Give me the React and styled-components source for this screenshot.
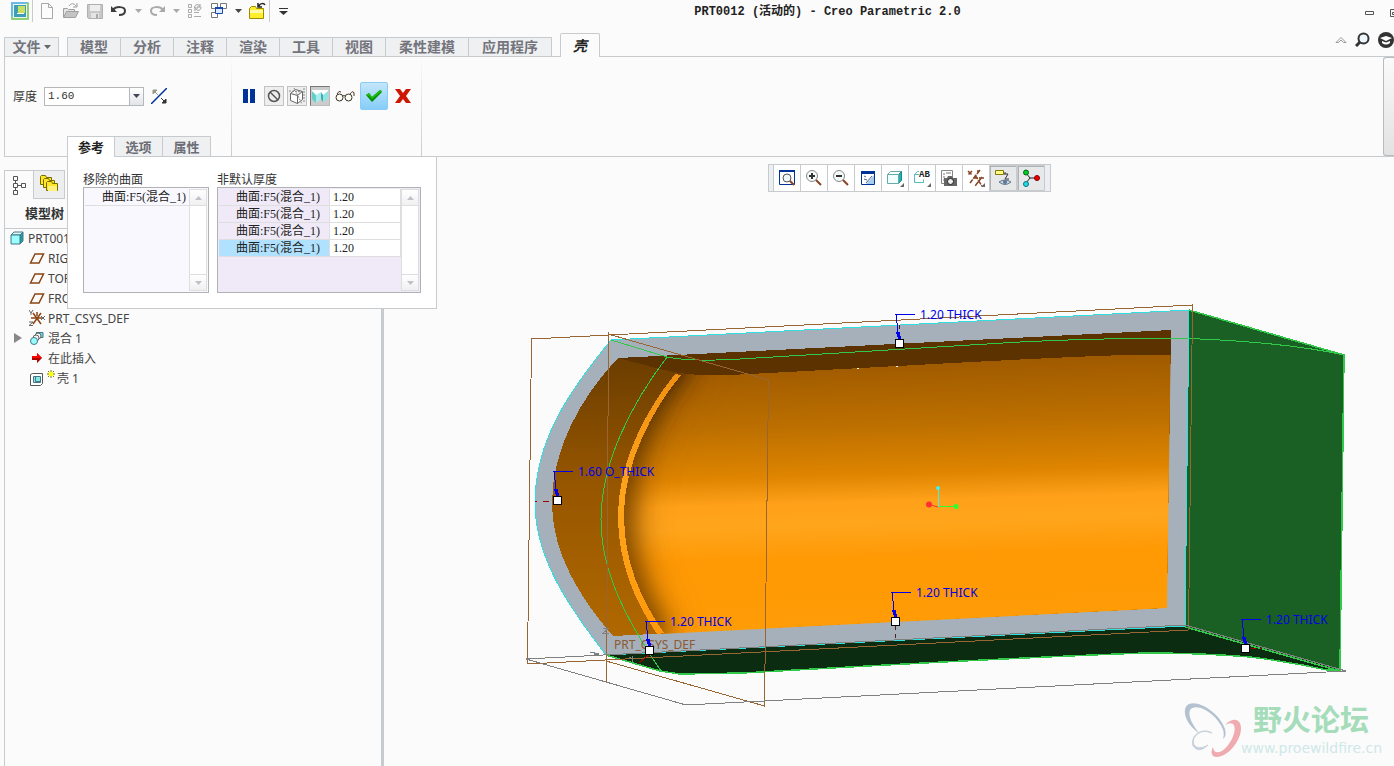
import React, { useState } from 'react';
import styled, { createGlobalStyle, css } from 'styled-components';

const line = '#c8cbce';
const wire = '#996633';

const GlobalStyle = createGlobalStyle`
  * {
    box-sizing: border-box;
  }
  body {
    margin: 0;
    background: #fbfbfb;
    color: #333;
    font-family: 'Noto Sans', 'Noto Sans CJK SC', sans-serif;
    font-size: 12px;
  }
  button, input {
    font: inherit;
    color: inherit;
  }
  svg {
    display: block;
    flex: none;
  }
`;

const Page = styled.div`
  display: flex;
  flex-direction: column;
  height: 100vh;
  overflow: hidden;
`;

const TitleBar = styled.header`
  display: flex;
  flex: none;
  height: 33px;
`;

const QuickAccess = styled.div`
  display: flex;
  align-items: center;
  height: 22px;
  padding-left: 8px;
`;

const PlainButton = styled.button`
  display: flex;
  align-items: center;
  justify-content: center;
  padding: 0;
  border: none;
  background: none;
  cursor: pointer;
`;

const QuickButton = styled(PlainButton)`
  width: ${(p) => (p.$caret ? 14 : 24)}px;
  height: 22px;
`;

const QuickSeparator = styled.span`
  width: 1px;
  height: 22px;
  margin: 0 ${(p) => (p.$last ? 6 : 2)}px 0 0;
  background: ${line};
`;

const WindowTitle = styled.h1`
  flex: 1;
  margin: 0;
  text-align: center;
  font: bold 12px/24px 'Liberation Mono', 'Noto Sans CJK SC', monospace;
  color: #222;
`;

const WindowButtons = styled.div`
  display: flex;
  align-items: center;
  gap: 16px;
  height: 25px;
  margin-right: -5px;
`;

const TabRow = styled.nav`
  display: flex;
  flex: none;
  align-items: flex-end;
  height: 24px;
  padding-left: 4px;
  position: relative;
  z-index: 1;
`;

const RibbonTab = styled(PlainButton)`
  height: 20px;
  padding: 0 12px;
  gap: 3px;
  border: solid ${line};
  border-width: 1px 1px 1px 0;
  background: #eef0f2;
  color: #74747c;
  font-size: 14px;
  line-height: 18px;
  font-weight: bold;
  white-space: nowrap;
`;

const FileTab = styled(RibbonTab)`
  width: 55px;
  padding: 0;
  border-left-width: 1px;
  margin-right: 8px;
`;

const TabGroup = styled.div`
  display: flex;
  border-left: 1px solid ${line};
  margin-right: 8px;
`;

const WideTab = styled(RibbonTab)`
  padding: 0 13px;
`;

const ActiveTab = styled(RibbonTab)`
  height: 24px;
  width: 40px;
  border-width: 1px 1px 0;
  border-radius: 2px 2px 0 0;
  background: #fbfbfb;
  color: #222;
  font-style: italic;
`;

const TabTools = styled.div`
  display: flex;
  align-items: center;
  align-self: flex-start;
  gap: 8px;
  height: 13px;
  margin-left: auto;
`;

const Ribbon = styled.section`
  display: flex;
  flex: none;
  position: relative;
  margin: -1px 0 0 4px;
  border: solid ${line};
  border-width: 1px 0 1px 1px;
`;

const RibbonGroup = styled.div`
  width: ${(p) => p.$width}px;
  border-right: 1px solid;
  border-image: linear-gradient(#fbfbfb, ${line}) 1;
`;

const Controls = styled.div`
  display: flex;
  align-items: center;
  height: 79px;
  padding: 0 0 1px ${(p) => p.$indent}px;
  gap: ${(p) => p.$gap}px;
`;

const Combo = styled.div`
  display: flex;
  width: 100px;
  height: 19px;
  border: 1px solid #b4b8bb;
  background: #fff;
`;

const ComboInput = styled.input`
  flex: 1;
  min-width: 0;
  padding: 0 3px;
  border: none;
  outline: none;
  background: none;
  font: 11px 'Liberation Mono', monospace;
`;

const ComboButton = styled(PlainButton)`
  width: 14px;
  border-left: 1px solid #b4b8bb;
  background: linear-gradient(#fff, #e2e4e8);
`;

const ToolButton = styled(PlainButton)`
  width: 20px;
  height: 20px;
  border: 1px solid #c0c2c4;
  background: #eeeeee;
  ${(p) =>
    p.$flat &&
    css`
      width: 24px;
      border: none;
      background: none;
    `}
  ${(p) =>
    p.$pressed &&
    css`
      border-color: #777 #bbb #bbb #777;
      background: #cccccc;
    `}
`;

const AcceptButton = styled(PlainButton)`
  width: 28px;
  height: 28px;
  border: 1px solid #8accf5;
  border-radius: 2px;
  background: linear-gradient(#c4e6fb, #86cdf8);
`;

const PanelTabs = styled.div`
  display: flex;
  margin: 0 0 -1px 62px;
  position: relative;
  z-index: 5;
`;

const PanelTab = styled(PlainButton)`
  width: 48px;
  height: 21px;
  border: solid ${line};
  border-width: 1px 1px ${(p) => (p.$active ? 0 : 1)}px ${(p) => (p.$active ? 1 : 0)}px;
  background: ${(p) => (p.$active ? '#fff' : '#eef0f2')};
  color: ${(p) => (p.$active ? '#222' : '#6c6c74')};
  font-size: 13px;
  line-height: 18px;
  font-weight: bold;
`;

const RibbonScroll = styled(PlainButton)`
  width: 11px;
  margin-left: auto;
  border: 1px solid #b8bbbe;
  border-right: none;
  border-radius: 3px 0 0 3px;
  background: linear-gradient(#fafafa, #e2e2e2);
`;

// Slides out under the ribbon, over the tree and the graphics window
const SlidePanel = styled.div`
  position: absolute;
  top: 99px;
  left: 62px;
  z-index: 4;
  display: flex;
  gap: 8px;
  width: 370px;
  padding: 16px 15px 15px;
  border: 1px solid ${line};
  background: #fff;
`;

const Collector = styled.section`
  width: ${(p) => p.$width}px;
`;

const CollectorTitle = styled.h2`
  margin: 0;
  font-size: 12px;
  font-weight: normal;
  line-height: 14px;
`;

const CollectorBox = styled.div`
  display: flex;
  height: 106px;
  padding: 1px;
  border: 1px solid #b0b2b4;
  background: ${(p) => p.$bg};
`;

const Rows = styled.table`
  flex: 1;
  align-self: flex-start;
  border-collapse: separate;
  border-spacing: 0;
  table-layout: fixed;
  font: 12px 'Liberation Serif', 'Noto Sans CJK SC', serif;
  color: #222;
`;

const NameCell = styled.td`
  height: 17px;
  padding: 0 1px 0 17px;
  border-bottom: 1px solid #dedede;
  background: ${(p) => (p.$selected ? '#b0e2ff' : 'transparent')};
  line-height: 16px;
  white-space: nowrap;
`;

const ValueCell = styled.td`
  width: 72px;
  padding: 0 3px;
  border: solid #dedede;
  border-width: 0 1px 1px;
  background: #fff;
  line-height: 16px;
`;

const ScrollTrack = styled.div`
  display: flex;
  flex-direction: column;
  justify-content: space-between;
  width: 18px;
  border: 1px solid #dcdee0;
  background: #fff;
`;

const ScrollButton = styled(PlainButton)`
  height: 16px;
  border-${(p) => (p.$down ? 'top' : 'bottom')}: 1px solid #dcdee0;
  background: linear-gradient(#fff, #f0f0f0);
`;

const Workspace = styled.main`
  display: flex;
  flex: 1;
  min-height: 0;
`;

const Navigator = styled.aside`
  display: flex;
  flex: none;
  flex-direction: column;
  width: 380px;
  margin-left: 4px;
  padding-top: 13px;
  border-right: 3px solid ${line};
`;

const NavigatorBody = styled.div`
  flex: 1;
  border-left: 1px solid ${line};
`;

const NavTabs = styled.div`
  display: flex;
  height: 29px;
`;

const NavTab = styled(PlainButton)`
  width: ${(p) => (p.$active ? 29 : 31)}px;
  border: solid ${line};
  border-width: 1px 1px ${(p) => (p.$active ? 0 : 1)}px 0;
  background: ${(p) => (p.$active ? 'none' : '#eceef0')};
`;

const TreeTitle = styled.h2`
  margin: 0;
  padding: 0 20px 1px;
  border-bottom: 1px solid ${line};
  font-size: 13px;
  line-height: 28px;
`;

const Tree = styled.ul`
  margin: 0;
  padding: 0;
  list-style: none;
`;

const TreeRow = styled.li`
  display: flex;
  align-items: center;
  height: 20px;
  padding: 0 0 2px ${(p) => (p.$root ? 5 : 9)}px;
  color: #444;
`;

const Expander = styled(PlainButton)`
  width: 15px;
  justify-content: flex-start;
`;

const TreeIcon = styled.span`
  display: flex;
  justify-content: ${(p) => (p.$root || p.$wide ? 'flex-start' : 'center')};
  width: ${(p) => (p.$wide ? 28 : p.$root ? 18 : 16)}px;
  margin-right: ${(p) => (p.$root || p.$wide ? 0 : 3)}px;
`;

const Viewport = styled.section`
  position: relative;
  flex: 1;
  min-width: 0;
`;

const Scene = styled.svg`
  width: 100%;
  height: 100%;
`;

const ViewToolbar = styled.div`
  position: absolute;
  top: 7px;
  left: 384px;
  display: flex;
  height: 28px;
  padding: 0 5px 0 4px;
  border: 1px solid ${line};
  background: #eceef2;
`;

const ViewButton = styled(PlainButton)`
  width: 27px;
  border-left: 1px solid ${line};
  background: #fff;
  ${(p) =>
    p.$pressed &&
    css`
      width: 28px;
      border: 1px solid ${line};
      background: #e6e8ea;
      box-shadow: inset 1px 1px 0 #b0b2b4;
    `}
`;

const Icon = ({ w = 16, h = w, children }) => (
  <svg width={w} height={h} viewBox={`0 0 ${w} ${h}`} fill="none" aria-hidden="true">
    {children}
  </svg>
);

const Caret = ({ color = '#444', up }) => (
  <Icon w={7} h={4}>
    <path d={up ? 'M0 4h7L3.500 0z' : 'M0 0h7L3.500 4z'} fill={color} />
  </Icon>
);

const AppIcon = () => (
  <Icon w={18}>
    <rect width="18" height="18" rx="1" fill="#8fcf78" />
    <path d="M0 1q0-1 1-1h16L0 15z" fill="#6cb8e8" />
    <path d="M2 2h14v14H2z" fill="#e9f6ee" />
    <path d="M3 3h3v10H3zM3 12h12v3H3z" fill="#3f9db4" />
    <path d="M6 3h9v9H6z" fill="#3f9db4" />
    <path d="M7 4h7v7H7z" fill="#c8e060" />
    <path d="M6 11h7v1H6z" fill="#fff" />
  </Icon>
);

const NewIcon = () => (
  <Icon>
    <path d="M2.500 .5h7l4 4v11h-11zM9.500 .5v4h4" fill="#fcfcfc" stroke="#a8a8a8" />
  </Icon>
);

const OpenIcon = () => (
  <Icon w={18}>
    <path d="M1.500 15V6.500h4l1 1h6V10" fill="#e4e4e4" stroke="#a0a0a0" />
    <path d="M1.500 15.500l3-6h12l-3 6z" fill="#c4c4c4" stroke="#a0a0a0" />
    <path d="M7 4c2-3 5-3 7 0M15 1v4h-4" stroke="#999" />
  </Icon>
);

const SaveIcon = () => (
  <Icon>
    <path d="M.5 1.500h15v14h-14l-1-1z" fill="#c8c8c8" stroke="#b0b0b0" />
    <path d="M3 2h10v6H3z" fill="#eee" />
    <path d="M4 10h8v5H4z" fill="#e4e4e4" />
    <path d="M9 11h2v4H9z" fill="#aaa" />
  </Icon>
);

const UndoIcon = () => (
  <Icon>
    <path d="M0 3v6h6z" fill="#3c3c3c" />
    <path d="M2 7c3-4 12-4 12 1 0 3-3 4-6 4" stroke="#3c3c3c" strokeWidth="2" />
  </Icon>
);

const RedoIcon = () => (
  <Icon>
    <path d="M16 3v6h-6z" fill="#aaa" />
    <path d="M14 7C11 3 2 3 2 8c0 3 3 4 6 4" stroke="#aaa" strokeWidth="2" />
  </Icon>
);

const RegenerateIcon = () => (
  <Icon>
    <path d="M1.500 1.500h3v3h-3zM1.500 6.500h3v3h-3zM1.500 11.500h3v3h-3zM7 9.500h5M7 13.500h7" stroke="#aaa" />
    <path d="M7.500 5c0-4 4-4 5-2M14 4c0 4-4 4-5 2M13 1v3h-3M8 8V5h3" stroke="#999" />
  </Icon>
);

const WindowsIcon = () => (
  <Icon>
    <path d="M.5 .5h6v5h-6zM9.500 .5h6v5h-6zM.5 9.500h6v5h-6z" fill="#fff" stroke="#777" />
    <path d="M4.500 4.500h7v6h-7z" fill="#dceaff" stroke="#1648b0" />
    <path d="M4 4h8v2H4z" fill="#1648b0" />
  </Icon>
);

const CloseFolderIcon = () => (
  <Icon w={18}>
    <path d="M1.500 16.500v-10l2-2h4l1 2h7v10z" fill="#ffee2c" stroke="#9c8a00" />
    <path d="M2 8h13v3H2z" fill="#fff9a8" />
    <path d="M11 4c1-3 5-3 6-1M10 1v4h4" stroke="#222" strokeWidth="1.500" />
  </Icon>
);

const FlipIcon = () => (
  <Icon>
    <path d="M0 16L16 0" stroke="#003399" strokeWidth="1.500" />
    <path d="M2 2h4L2 6zM3 3l4 4" fill="#999988" stroke="#999988" />
    <path d="M15 15h-4l4-4zM10 10l4 4" fill="#333" stroke="#333" />
  </Icon>
);

const GlassesIcon = () => (
  <Icon w={20} h={12}>
    <circle cx="4.500" cy="7.500" r="3.500" fill="#fffff0" stroke="#333" />
    <circle cx="13.500" cy="7.500" r="3.500" fill="#fffff0" stroke="#333" />
    <path d="M8 6q1-1 2 0M2 4q2-4 4-2M15 4q3-4 4-1v3" stroke="#553322" />
  </Icon>
);

const WireBoxIcon = () => (
  <Icon w={18}>
    <path d="M2.500 6.500l7 2v8l-7-3zM9.500 8.500l5-4v8l-5 4M2.500 6.500l5-4 7 2" fill="#fff" stroke="#666" />
    <path d="M1 4l15 1M6 1l8 16M16 1v14" stroke="#888" strokeDasharray="2 1" />
  </Icon>
);

const ShellPreviewIcon = () => (
  <Icon w={18}>
    <path d="M1 4l4 3v9l-4-4z" fill="#66cccc" />
    <path d="M5 7l5-3v8l-5 4z" fill="#a6eeee" />
    <path d="M10 4l2 3v8l-2-3z" fill="#44aaaa" />
    <path d="M12 7l5-3v8l-5 3z" fill="#8fe4e4" />
    <path d="M1 3h16v1l-5 4-2-3-5 3-4-4z" fill="#fff" />
  </Icon>
);

const PlaneIcon = () => (
  <Icon w={16} h={11}>
    <path d="M1.500 10L6 1h8.500L10 10z" stroke="#8b4513" strokeWidth="1.500" />
  </Icon>
);

const PartIcon = () => (
  <Icon w={14}>
    <path d="M1 4l3-3h9l-3 3z" fill="#dffafa" stroke="#447788" />
    <path d="M10 4l3-3v9l-3 3z" fill="#22a0a0" stroke="#447788" />
    <path d="M1 4h9v9H1z" fill="#99ffff" stroke="#447788" />
  </Icon>
);

const CsysIcon = () => (
  <Icon>
    <path d="M2 8h11M4 3l8 11M12 3L4 14M8 2v4" stroke="#8b4513" strokeWidth="1.500" />
    <path d="M0 0l2 3 2-3M2 3v2M12 6l4 4M16 6l-4 4M0 12h4l-4 3.500h4" stroke="#666" />
  </Icon>
);

const BlendIcon = () => (
  <Icon w={14}>
    <path d="M6 1.500h7v5H8" fill="#66dddd" stroke="#447788" />
    <circle cx="8" cy="5" r="3" fill="#f4f4f4" stroke="#666" />
    <circle cx="6" cy="7" r="3" fill="#f4f4f4" stroke="#666" />
    <circle cx="4" cy="10" r="3.500" fill="#99ffff" stroke="#447788" />
  </Icon>
);

const InsertIcon = () => (
  <Icon w={12}>
    <path d="M1 4h5V1l5 5-5 5V8H1z" fill="#aa0000" />
    <path d="M1 4h5V1l5 5H1z" fill="#ff0000" />
  </Icon>
);

const ShellIcon = () => (
  <Icon w={28} h={16}>
    <path d="M1.500 4.500l2-1h10v10l-2 2h-10z" fill="#fff" stroke="#555" />
    <path d="M4.500 6.500h7v6h-7z" fill="#8ce6e6" stroke="#447788" />
    <path d="M6.500 7v4.500H11" stroke="#447788" />
    <path d="M18 4h8M22 0v8M19 1l6 6M25 1l-6 6" stroke="#777700" />
    <path d="M20 2h4v4h-4z" fill="#ffff00" />
  </Icon>
);

const TreeTabIcon = () => (
  <Icon w={14} h={19}>
    <path d="M1.500 .5h4v4h-4zM1.500 7.500h4v4h-4zM9.500 7.500h4v4h-4zM1.500 14.500h4v4h-4z" stroke="#555" />
    <path d="M3.500 5v2M3.500 12v2M6 9.500h3" stroke="#555" />
  </Icon>
);

const FoldersIcon = () => (
  <Icon w={19}>
    {[0, 3, 6].map((d) => (
      <path key={d} d={`M${d + 0.5} ${d + 9.5}v-8l1-1h4l1 2h5v7z`} fill="#ffe626" stroke="#776a00" />
    ))}
    <path d="M8 11h9v5H8z" fill="#fff27a" />
  </Icon>
);

const Lens = ({ sign }) => (
  <Icon w={18}>
    <circle cx="7" cy="7" r="5.500" fill="#f4fafa" stroke="#888" />
    <path d="M11 11l5 5" stroke="#884422" strokeWidth="2" />
    <path d={sign === '+' ? 'M4 7h6M7 4v6' : 'M4 7h6'} stroke="#333" strokeWidth="2" />
  </Icon>
);

const viewIcons = [
  {
    label: '重新调整',
    icon: (
      <Icon w={18}>
        <path d="M1.500 1.500h15v14h-15z" fill="#fff" stroke="#003399" />
        <path d="M1 2h16" stroke="#003399" strokeWidth="2" />
        <circle cx="9" cy="9" r="4" fill="#eef8f8" stroke="#555" />
        <path d="M12 12l4 4" stroke="#884422" strokeWidth="2" />
      </Icon>
    ),
  },
  { label: '放大', icon: <Lens sign="+" /> },
  { label: '缩小', icon: <Lens sign="-" /> },
  {
    label: '重画',
    icon: (
      <Icon>
        <path d="M1.500 1.500h13v13h-13z" fill="#fff" stroke="#003399" />
        <path d="M1 1h14v3H1z" fill="#003399" />
        <path d="M6 14L14 5v9z" fill="#a8ccec" />
        <path d="M4 6l2 1M4 9l3 1M6 13l6-7" stroke="#556688" />
      </Icon>
    ),
  },
  {
    label: '显示样式',
    icon: (
      <Icon w={18}>
        <path d="M1.500 5.500l3-3h11l-3 3z" fill="#fff" stroke="#66aaaa" />
        <path d="M12.500 5.500l3-3v9l-3 3z" fill="#22b0b0" stroke="#228888" />
        <path d="M1.500 5.500h11v9h-11z" fill="#f2ffff" stroke="#66aaaa" />
        <path d="M18 14v4h-4z" fill="#666" />
      </Icon>
    ),
  },
  {
    label: '已保存方向',
    icon: (
      <Icon w={18}>
        <path d="M6 5.500H1.500v8h9v-3M1.500 5.500l3-3H6" stroke="#55bbbb" />
        <text x="6" y="8" fontSize="9" fontFamily="Liberation Mono" fontWeight="bold" fill="#222">AB</text>
        <path d="M18 14v4h-4z" fill="#666" />
      </Icon>
    ),
  },
  {
    label: '视图管理器',
    icon: (
      <Icon w={18}>
        <path d="M1.500 1.500h11v13h-11z" fill="#fff" stroke="#888" />
        <path d="M3 5h2M3 8h2M3 11h2M6 4h5" stroke="#777" />
        <path d="M4 9h3l1-2h4l1 2h4v8H4z" fill="#666" />
        <circle cx="10.500" cy="12.500" r="3" fill="#eee" stroke="#222" />
      </Icon>
    ),
  },
  {
    label: '基准显示过滤器',
    icon: (
      <Icon w={18}>
        <path
          d="M1 2l4 4M5 2L1 6M10 2l3 0M13 1L3 14M6 9h11M8 6l7 11M15 8l-7 9"
          stroke="#884422"
          strokeWidth="1.500"
          strokeDasharray="5 1"
        />
        <path d="M18 14v4h-4z" fill="#666" />
      </Icon>
    ),
  },
  {
    label: '注释显示',
    pressed: true,
    icon: (
      <Icon w={18}>
        <path d="M1.500 1.500h8v4h-8z" fill="#ffff88" stroke="#887700" />
        <path d="M10 4h2M10 5h4l-3 5h4" stroke="#333" />
        <path d="M5 13q6-4 12 0-6 5-12 0z" fill="#cdd8e4" stroke="#667788" />
        <circle cx="11" cy="13" r="2" fill="#557799" />
      </Icon>
    ),
  },
  {
    label: '旋转中心',
    pressed: true,
    icon: (
      <Icon w={18}>
        <path d="M4 4l4 5-4 5M8 9h6" stroke="#222" />
        <circle cx="4" cy="3.500" r="2.500" fill="#00cc22" stroke="#006611" />
        <circle cx="15" cy="9" r="2.500" fill="#ee0000" stroke="#880000" />
        <circle cx="4" cy="15" r="2.500" fill="#22dddd" stroke="#007788" />
      </Icon>
    ),
  },
];

const ribbonTabs = ['模型', '分析', '注释', '渲染', '工具', '视图', '柔性建模', '应用程序'];

const treeItems = [
  { name: 'RIGHT', icon: <PlaneIcon /> },
  { name: 'TOP', icon: <PlaneIcon /> },
  { name: 'FRONT', icon: <PlaneIcon /> },
  { name: 'PRT_CSYS_DEF', icon: <CsysIcon /> },
  { name: '混合 1', icon: <BlendIcon />, expandable: true },
  { name: '在此插入', icon: <InsertIcon /> },
  { name: '壳 1', icon: <ShellIcon />, wide: true },
];

const surface = '曲面:F5(混合_1)';

const dimensions = [
  { x: 899, y: 343, text: '1.20 THICK' },
  { x: 557, y: 500, text: '1.60 O_THICK' },
  { x: 649, y: 650, text: '1.20 THICK' },
  { x: 895, y: 621, text: '1.20 THICK' },
  { x: 1245, y: 648, text: '1.20 THICK' },
];

function ScrollBar() {
  return (
    <ScrollTrack>
      <ScrollButton aria-label="向上滚动"><Caret up color="#c0c0c8" /></ScrollButton>
      <ScrollButton $down aria-label="向下滚动"><Caret color="#c0c0c8" /></ScrollButton>
    </ScrollTrack>
  );
}

function Dimension({ x, y, text }) {
  return (
    <g>
      <g shapeRendering="crispEdges">
        <path d={`M${x} ${y - 3}l-3-25.500h19`} fill="none" stroke="#0000ee" />
        <path d={`M${x - 3} ${y - 11}h4l1 7h-3z`} fill="#0000ee" />
        <rect x={x - 3.5} y={y - 3.5} width="8" height="8" fill="#fff" stroke="#000" />
      </g>
      <text x={x + 21} y={y - 24} fontSize="12" fill="#0000e6">{text}</text>
    </g>
  );
}

// Model coordinates are window coordinates, the viewBox starts at the viewport corner
function ModelScene() {
  return (
    <Scene viewBox="384 157 1010 609" preserveAspectRatio="xMinYMin meet" role="img" aria-label="PRT0012">
      <defs>
        <linearGradient id="cavity" gradientUnits="userSpaceOnUse" x1="900" y1="355" x2="908" y2="635">
          <stop offset="0" stopColor="#9c5800" />
          <stop offset="0.250" stopColor="#bd7000" />
          <stop offset="0.420" stopColor="#de8400" />
          <stop offset="0.520" stopColor="#ffa119" />
          <stop offset="0.600" stopColor="#ffa51c" />
          <stop offset="0.720" stopColor="#ff9904" />
          <stop offset="1" stopColor="#ff9c06" />
        </linearGradient>
        <linearGradient id="endWall" x1="0" y1="0" x2="0" y2="1">
          <stop offset="0" stopColor="#623800" />
          <stop offset="0.500" stopColor="#965600" />
          <stop offset="1" stopColor="#b06800" />
        </linearGradient>
        <linearGradient id="rib" x1="0" y1="0" x2="0" y2="1">
          <stop offset="0" stopColor="#f09010" />
          <stop offset="0.500" stopColor="#ffa51c" />
          <stop offset="1" stopColor="#ff980c" />
        </linearGradient>
        <linearGradient id="fillet" x1="0" y1="0" x2="0" y2="1">
          <stop offset="0" stopColor="#3c2000" />
          <stop offset="0.300" stopColor="#5c3400" stopOpacity="0.900" />
          <stop offset="0.600" stopColor="#7a4600" stopOpacity="0.900" />
          <stop offset="1" stopColor="#7a4600" stopOpacity="0.900" />
        </linearGradient>
        <filter id="soft" x="-100%" y="-20%" width="300%" height="140%">
          <feGaussianBlur stdDeviation="11" />
        </filter>
        <filter id="wide" x="-100%" y="-20%" width="300%" height="140%">
          <feGaussianBlur stdDeviation="18" />
        </filter>
        <clipPath id="cavityClip">
          <path d="M680 374L1171 330L1167 608L660 634C640 603 621 565 621 515C621 465 652 412 680 374z" />
        </clipPath>
      </defs>

      <g shapeRendering="crispEdges">
        <path d="M1189 310L1344 355L1340 670L1185 626z" fill="#1a6024" />
        <path
          d="M606 655L1185 626L1340 670H1327C1300 664 1275 660 1250 657C1215 654 1180 653 1145 653C1000 658 850 667 743 673L680 674L660 671z"
          fill="#0c2c12"
        />
        <path
          d="M611 340L1189 310L1185 626L606 655C572 611 535 560 535 503C535 440 570 390 611 340z"
          fill="#a6b0ba"
        />
        <path d="M618 358L1171 330L1167 608L613 636C577 595 552 550 552 503C552 450 580 398 618 358z" fill="url(#endWall)" />
      </g>
      <g clipPath="url(#cavityClip)">
        <path d="M600 330H1180V640H600z" fill="url(#cavity)" />
        <path
          d="M684 350C640 402 614 460 614 517C614 560 630 605 658 650"
          fill="none"
          stroke="#a05c00"
          strokeWidth="44"
          opacity="0.700"
          filter="url(#wide)"
        />
        <path
          d="M683 356C643 402 617 460 617 517C617 560 631 600 656 640"
          fill="none"
          stroke="url(#fillet)"
          strokeWidth="30"
          filter="url(#soft)"
        />
      </g>
      <g shapeRendering="crispEdges" fill="none">
        <path d="M618 358L1171 330V355H1125C1030 358 850 369 730 375Q690 377 660 369z" fill="#5c3200" />
        <path d="M675 374C640 418 618 468 618 517C618 562 635 602 657 634L664 633C641 600 624 562 624 515C624 468 648 415 681 375z" fill="url(#rib)" />

        <path d="M611 340L667 357Q690 362 740 359L1020 342Q1120 337 1200 339Q1290 343 1344 355" stroke="#32c84a" />
        <path d="M667 357C632 403 601 462 601 520C601 575 630 625 661 671" stroke="#32c84a" />
        <path
          d="M1189 310L1344 355L1340 670H1327C1300 664 1275 660 1250 657C1215 654 1180 653 1145 653C1000 658 850 667 743 673L680 674L660 671L606 655M1185 627L1340 671"
          stroke="#32c84a"
          strokeWidth="1.500"
        />
        <path
          d="M611 340L1189 310L1185 626L606 655C572 611 535 560 535 503C535 440 570 390 611 340"
          stroke="#30e0e0"
        />

        <path
          d="M531.500 339L1192.500 305L1188.500 630L527.500 664zM608 334L768.500 380L764.500 706L606 661M608.500 332L606.500 682"
          stroke={wire}
        />
        <path
          d="M526 659L686 705L1346 671L1185 625zM590 656l9-2-9-2M603 628h6l-6 5h6M629 657l3 2M632 656v6"
          stroke="#808080"
        />
        <path d="M535 501.500h2M543 501.500h6M1251 648.500h5M1260 648.500h2M650 654l-11 9" stroke="#990000" />
        <path d="M895.500 626v14M899.500 325v14" stroke="#502020" strokeDasharray="4 4" />
        <path d="M857 368.500h2M896 366.500h2" stroke="#fff" />
      </g>

      <text x="614" y="649" fontSize="12" fill="#8b5a32">PRT_CSYS_DEF</text>
      {dimensions.map((d) => (
        <Dimension key={`${d.x}-${d.y}`} {...d} />
      ))}

      <path d="M938.500 507v-18" stroke="#40f0f0" />
      <path d="M929 504.500l9 2.500" stroke="#ff3030" />
      <path d="M939 506.500h17" stroke="#30ff30" />
      <circle cx="938" cy="488" r="2" fill="#40f0f0" />
      <circle cx="929" cy="504.500" r="3" fill="#ff3030" />
      <circle cx="956" cy="506.500" r="2.500" fill="#30ff30" />

      <g>
        <path
          d="M1189 704C1200 700 1220 714 1225 729Q1227 736 1223 739Q1226 731 1218 721C1208 708 1194 704 1190 710Q1187 718 1199 733C1183 722 1182 707 1189 704z"
          fill="#b4c2d0"
        />
        <path
          d="M1225 725C1236 714 1244 722 1240 735C1235 750 1221 760 1213 756Q1210 752 1213 747Q1214 755 1222 751C1231 745 1238 729 1233 724Q1230 722 1225 725z"
          fill="#f0abb0"
        />
        <path
          d="M1212 733Q1200 728 1194 738C1191 746 1198 751 1208 745Q1199 754 1193 746C1190 735 1202 727 1212 733z"
          fill="#c8d2dc"
          stroke="#c8d2dc"
        />
      </g>
      <text x="1253" y="731" fontSize="29" fontWeight="bold" fill="#a5dcb9">野火论坛</text>
      <text x="1241" y="753" fontSize="14" fontFamily="'DejaVu Sans', sans-serif" fill="#cfe8e8">www.proewildfire.cn</text>
    </Scene>
  );
}

function App() {
  const [thickness, setThickness] = useState('1.60');

  return (
    <Page>
      <GlobalStyle />
      <TitleBar>
        <QuickAccess>
          <QuickButton aria-label="Creo"><AppIcon /></QuickButton>
          <QuickSeparator />
          <QuickButton aria-label="新建"><NewIcon /></QuickButton>
          <QuickButton aria-label="打开"><OpenIcon /></QuickButton>
          <QuickButton aria-label="保存"><SaveIcon /></QuickButton>
          <QuickButton aria-label="撤消"><UndoIcon /></QuickButton>
          <QuickButton $caret aria-label="撤消列表"><Caret color="#aaa" /></QuickButton>
          <QuickButton aria-label="重做"><RedoIcon /></QuickButton>
          <QuickButton $caret aria-label="重做列表"><Caret color="#aaa" /></QuickButton>
          <QuickButton aria-label="重新生成"><RegenerateIcon /></QuickButton>
          <QuickButton aria-label="窗口"><WindowsIcon /></QuickButton>
          <QuickButton $caret aria-label="窗口列表"><Caret /></QuickButton>
          <QuickButton aria-label="关闭"><CloseFolderIcon /></QuickButton>
          <QuickSeparator $last />
          <QuickButton $caret aria-label="自定义">
            <Icon w={9} h={7}>
              <path d="M0 0h9v1H0zM0 3h9L4.500 7z" fill="#333" />
            </Icon>
          </QuickButton>
        </QuickAccess>
        <WindowTitle>PRT0012 (活动的) - Creo Parametric 2.0</WindowTitle>
        <WindowButtons>
          <PlainButton aria-label="最小化">
            <Icon w={9} h={4}><path d="M.5 .5h8v3h-8z" stroke="#555" /></Icon>
          </PlainButton>
          <PlainButton aria-label="还原">
            <Icon w={9} h={8}>
              <path d="M.5 .5h8v7h-8zM2.500 3.500h4v2h-4z" stroke="#555" />
            </Icon>
          </PlainButton>
        </WindowButtons>
      </TitleBar>

      <TabRow>
        <FileTab>文件<Caret color="#666" /></FileTab>
        <TabGroup>
          {ribbonTabs.map((t) =>
            t.length > 2 ? <WideTab key={t}>{t}</WideTab> : <RibbonTab key={t}>{t}</RibbonTab>
          )}
        </TabGroup>
        <ActiveTab>壳</ActiveTab>
        <TabTools>
          <PlainButton aria-label="最小化功能区">
            <Icon w={12} h={8}><path d="M1 6.500l5-5 5 5H8.500L6 4 3.500 6.500z" stroke="#999" /></Icon>
          </PlainButton>
          <PlainButton aria-label="搜索">
            <Icon w={15}>
              <circle cx="8.500" cy="6.500" r="5" fill="#eef8fc" stroke="#333" strokeWidth="2" />
              <path d="M5 10l-4 4" stroke="#333" strokeWidth="3" />
            </Icon>
          </PlainButton>
          <PlainButton aria-label="帮助">
            <Icon w={16}>
              <circle cx="8" cy="8" r="8" fill="#333" />
              <path d="M2 6l6-2 6 2-6 3z" fill="#fff" />
              <path d="M4 9v2q4 3 8 0V9L8 10.500z" fill="#fff" />
            </Icon>
          </PlainButton>
        </TabTools>
      </TabRow>

      <Ribbon>
        <RibbonGroup $width={227}>
          <Controls $indent={8} $gap={7}>
            <label htmlFor="thickness">厚度</label>
            <Combo>
              <ComboInput id="thickness" value={thickness} onChange={(e) => setThickness(e.target.value)} />
              <ComboButton aria-label="厚度列表"><Caret color="#444455" /></ComboButton>
            </Combo>
            <PlainButton aria-label="反向"><FlipIcon /></PlainButton>
          </Controls>
          <PanelTabs>
            <PanelTab $active>参考</PanelTab>
            <PanelTab>选项</PanelTab>
            <PanelTab>属性</PanelTab>
          </PanelTabs>
        </RibbonGroup>
        <RibbonGroup $width={190}>
          <Controls $indent={5} $gap={3}>
            <ToolButton $flat aria-label="暂停">
              <Icon w={12} h={14}><path d="M0 0h5v14H0zM7 0h5v14H7z" fill="#003399" /></Icon>
            </ToolButton>
            <ToolButton aria-label="无预览">
              <Icon w={14}>
                <circle cx="7" cy="7" r="5.500" stroke="#555" strokeWidth="1.500" />
                <path d="M3 3l8 8" stroke="#555" strokeWidth="1.500" />
              </Icon>
            </ToolButton>
            <ToolButton aria-label="分离"><WireBoxIcon /></ToolButton>
            <ToolButton $pressed aria-label="连接"><ShellPreviewIcon /></ToolButton>
            <ToolButton $flat aria-label="预览"><GlassesIcon /></ToolButton>
            <AcceptButton aria-label="确定">
              <Icon w={18} h={14}>
                <path d="M1 6l3-2 3 4 8-7 2 2L7 13z" fill="#009000" />
                <path d="M1 6l3-2 3 4 8-7 2 1L7 10 4 7z" fill="#22bb11" />
              </Icon>
            </AcceptButton>
            <ToolButton $flat aria-label="取消">
              <Icon w={16} h={14}>
                <path d="M0 0h5l3 4 3-4h5l-5 7 5 7h-5l-3-4-3 4H0l5-7z" fill="#cc1800" />
              </Icon>
            </ToolButton>
          </Controls>
        </RibbonGroup>
        <RibbonScroll aria-label="滚动功能区" />

        <SlidePanel>
          <Collector $width={126}>
            <CollectorTitle>移除的曲面</CollectorTitle>
            <CollectorBox $bg="#faf8ff">
              <Rows>
                <tbody>
                  <tr><NameCell>{surface}</NameCell></tr>
                </tbody>
              </Rows>
              <ScrollBar />
            </CollectorBox>
          </Collector>
          <Collector $width={204}>
            <CollectorTitle>非默认厚度</CollectorTitle>
            <CollectorBox $bg="#f0eaf8">
              <Rows>
                <tbody>
                  {[0, 1, 2, 3].map((i) => (
                    <tr key={i}>
                      <NameCell $selected={i === 3}>{surface}</NameCell>
                      <ValueCell>1.20</ValueCell>
                    </tr>
                  ))}
                </tbody>
              </Rows>
              <ScrollBar />
            </CollectorBox>
          </Collector>
        </SlidePanel>
      </Ribbon>

      <Workspace>
        <Navigator>
          <NavigatorBody>
            <NavTabs>
              <NavTab $active aria-label="模型树"><TreeTabIcon /></NavTab>
              <NavTab aria-label="文件夹浏览器"><FoldersIcon /></NavTab>
            </NavTabs>
            <TreeTitle>模型树</TreeTitle>
            <Tree>
              <TreeRow $root>
                <TreeIcon $root><PartIcon /></TreeIcon>
                PRT0012.PRT
              </TreeRow>
              {treeItems.map((item) => (
                <TreeRow key={item.name}>
                  <Expander aria-label={item.name}>
                    {item.expandable && (
                      <Icon w={8} h={10}><path d="M0 0l8 5-8 5z" fill="#888" /></Icon>
                    )}
                  </Expander>
                  <TreeIcon $wide={item.wide}>{item.icon}</TreeIcon>
                  {item.name}
                </TreeRow>
              ))}
            </Tree>
          </NavigatorBody>
        </Navigator>
        <Viewport>
          <ModelScene />
          <ViewToolbar>
            {viewIcons.map((v) => (
              <ViewButton key={v.label} aria-label={v.label} $pressed={v.pressed}>{v.icon}</ViewButton>
            ))}
          </ViewToolbar>
        </Viewport>
      </Workspace>
    </Page>
  );
}

export default App;
